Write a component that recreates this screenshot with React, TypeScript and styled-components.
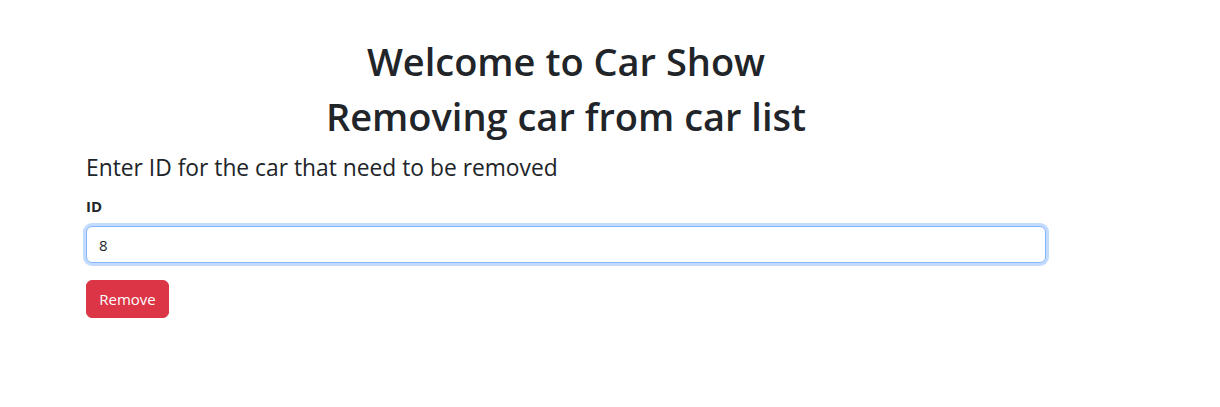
import React from "react";
import styled, { createGlobalStyle } from "styled-components";

const Global = createGlobalStyle`
  html, body { margin: 0; padding: 0; background: #fff; }
  body {
    font-family: "Open Sans", "Noto Sans", "Liberation Sans", sans-serif;
    color: #212529;
    font-size: 16px;
    line-height: 1.5;
  }
  * { box-sizing: border-box; }
`;

const Page = styled.main`
  display: flex;
  flex-direction: column;
  width: 960px;
  margin: 0 0 0 86px;
  padding-top: 38px;
`;

const Title = styled.h1`
  margin: 0 0 8px;
  font-size: 38px;
  font-weight: 600;
  line-height: 1.23;
  text-align: center;
`;

const Lead = styled.p`
  margin: 4px 0 9px;
  font-size: 22.8px;
  font-weight: 400;
  line-height: 1.5;
`;

const Field = styled.div`
  display: flex;
  flex-direction: column;
  gap: 9px;
  margin-bottom: 17px;
`;

const Label = styled.label`
  font-size: 15px;
  font-weight: 700;
  line-height: 1.5;
`;

const Input = styled.input`
  display: block;
  width: 100%;
  height: 37px;
  padding: 6px 12px;
  font-family: inherit;
  font-size: 15px;
  color: #212529;
  background: #fff;
  border: 1px solid #86b7fe;
  border-radius: 6px;
  outline: 0;
  box-shadow: 0 0 0 3px rgba(13, 110, 253, 0.25);
`;

const Button = styled.button`
  align-self: flex-start;
  width: 83px;
  height: 38px;
  padding: 6px 12px;
  font-family: inherit;
  font-size: 15px;
  color: #fff;
  background: #dc3545;
  border: 1px solid #dc3545;
  border-radius: 6px;
  cursor: pointer;
`;

export default function App() {
  return (
    <>
      <Global />
      <Page>
        <Title>Welcome to Car Show</Title>
        <Title>Removing car from car list</Title>
        <Lead>Enter ID for the car that need to be removed</Lead>
        <Field>
          <Label htmlFor="id">ID</Label>
          <Input id="id" defaultValue="8" />
        </Field>
        <Button type="button">Remove</Button>
      </Page>
    </>
  );
}
